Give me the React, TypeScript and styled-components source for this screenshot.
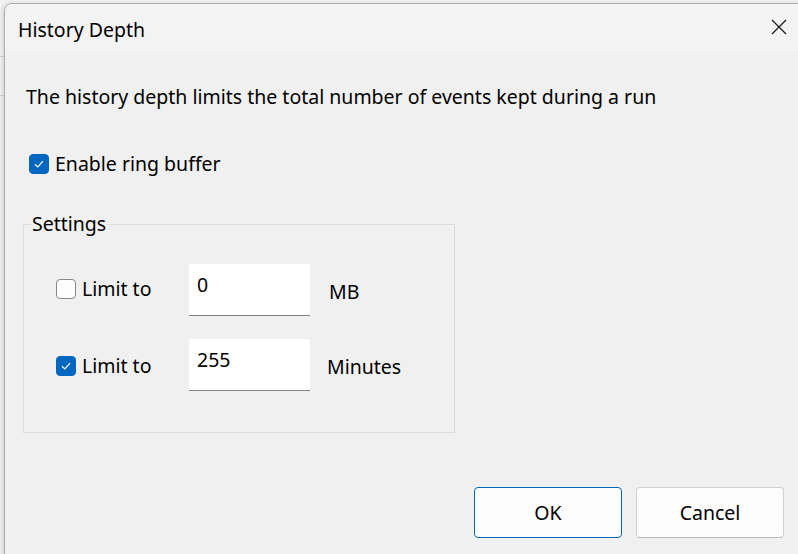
import styled, { createGlobalStyle } from "styled-components";

const Global = createGlobalStyle`
  html, body {
    margin: 0;
    padding: 0;
    width: 798px;
    height: 554px;
    overflow: hidden;
  }
  body {
    background-color: #f3f3f3;
    background-image:
      linear-gradient(#d6d6d6, #d6d6d6),
      linear-gradient(#d6d6d6, #d6d6d6);
    background-size: 6px 1px, 6px 1px;
    background-position: 0 56px, 0 95px;
    background-repeat: no-repeat;
    font-family: "Noto Sans", "Open Sans", sans-serif;
    font-size: 19.5px;
    color: #000;
  }
`;

const Window = styled.div`
  margin: 3px 0 0 4px;
  width: 810px;
  height: 570px;
  border: 1px solid #aeaeae;
  border-radius: 8px;
  background: #f0f0f0;
  box-shadow: -2px 0 4px rgba(0, 0, 0, 0.12);
  overflow: hidden;
  display: flex;
  flex-direction: column;
`;

const TitleBar = styled.div`
  height: 49px;
  flex: none;
  background: #f3f3f3;
  display: flex;
  align-items: center;
  justify-content: space-between;
  padding: 0 0 0 13px;
`;

const Title = styled.span`
  line-height: 26px;
  margin-top: 3px;
`;

const CloseBtn = styled.button`
  width: 46px;
  height: 40px;
  margin-right: 13px;
  margin-top: -4px;
  border: none;
  background: transparent;
  display: flex;
  align-items: center;
  justify-content: center;
  padding: 0;
`;

const Body = styled.div`
  display: flex;
  flex-direction: column;
  padding: 0 0 0 21px;
`;

const Description = styled.p`
  margin: 31px 0 0 0;
  line-height: 26px;
`;

const CheckRow = styled.label`
  display: flex;
  align-items: center;
  gap: 6px;
  line-height: 26px;
`;

const Box = styled.span<{ $checked: boolean }>`
  width: 20px;
  height: 20px;
  box-sizing: border-box;
  border-radius: 4px;
  flex: none;
  display: flex;
  align-items: center;
  justify-content: center;
  background: ${(p) => (p.$checked ? "#0067c0" : "#fdfdfd")};
  border: 1px solid ${(p) => (p.$checked ? "#0067c0" : "#878787")};
`;

const RingRow = styled.div`
  margin: 41px 0 0 3px;
`;

const Group = styled.fieldset`
  margin: 34px 0 0 -3px;
  width: 432px;
  height: 222px;
  box-sizing: border-box;
  border: 1px solid #dcdcdc;
  padding: 0;
  display: flex;
  flex-direction: column;
  gap: 23px;
`;

const Legend = styled.legend`
  line-height: 26px;
  padding: 0 1px;
  margin-left: 7px;
`;

const LimitRow = styled.div`
  display: flex;
  align-items: center;
  margin-left: 32px;
  &:first-of-type {
    margin-top: 27px;
  }
`;

const LimitLabel = styled(CheckRow)<{ $offset: number }>`
  width: 133px;
  margin-top: ${(p) => p.$offset}px;
`;

const Input = styled.div`
  width: 121px;
  height: 52px;
  box-sizing: border-box;
  background: #ffffff;
  border-bottom: 1.5px solid #838383;
  padding: 8px 0 0 8px;
  line-height: 26px;
`;

const Unit = styled.span<{ $shift: number }>`
  margin-left: ${(p) => p.$shift}px;
  margin-top: 4px;
  line-height: 26px;
`;

const Footer = styled.div`
  margin-top: 54px;
  display: flex;
  gap: 14px;
  padding-left: 448px;
`;

const Button = styled.button<{ $primary?: boolean }>`
  width: 148px;
  height: 51px;
  box-sizing: border-box;
  border-radius: 4px;
  background: #fdfdfd;
  border: 1px solid ${(p) => (p.$primary ? "#0067c0" : "#d0d0d0")};
  border-bottom-color: ${(p) => (p.$primary ? "#0067c0" : "#bdbdbd")};
  font-family: inherit;
  font-size: 19.5px;
  color: #000;
  padding: 0;
`;

const Tick = () => (
  <svg width="12" height="12" viewBox="0 0 12 12">
    <path d="M2 6.3 L4.8 9 L10 3.2" fill="none" stroke="#fff" strokeWidth="1.2" />
  </svg>
);

const Check = ({ checked }: { checked: boolean }) => (
  <Box $checked={checked}>{checked && <Tick />}</Box>
);

export default function App() {
  return (
    <>
      <Global />
      <Window>
        <TitleBar>
          <Title>History Depth</Title>
          <CloseBtn aria-label="Close">
            <svg width="16" height="16" viewBox="0 0 16 16">
              <path d="M1 1 L15 15 M15 1 L1 15" stroke="#1a1a1a" strokeWidth="1.3" />
            </svg>
          </CloseBtn>
        </TitleBar>
        <Body>
          <Description>
            The history depth limits the total number of events kept during a run
          </Description>
          <RingRow>
            <CheckRow>
              <Check checked />
              Enable ring buffer
            </CheckRow>
          </RingRow>
          <Group>
            <Legend>Settings</Legend>
            <LimitRow>
              <LimitLabel $offset={-3}>
                <Check checked={false} />
                Limit to
              </LimitLabel>
              <Input>0</Input>
              <Unit $shift={19}>MB</Unit>
            </LimitRow>
            <LimitRow>
              <LimitLabel $offset={1}>
                <Check checked />
                Limit to
              </LimitLabel>
              <Input>255</Input>
              <Unit $shift={17}>Minutes</Unit>
            </LimitRow>
          </Group>
          <Footer>
            <Button $primary>OK</Button>
            <Button>Cancel</Button>
          </Footer>
        </Body>
      </Window>
    </>
  );
}
